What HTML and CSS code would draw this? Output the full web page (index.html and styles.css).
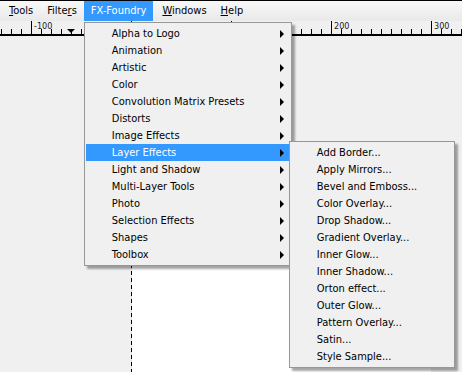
FILE: index.html
```html
<!DOCTYPE html>
<html lang="en">
<head>
  <meta charset="UTF-8">
  <meta name="viewport" content="width=device-width, initial-scale=1.0">
  <title>FX-Foundry menu</title>
  <link rel="stylesheet" href="styles.css">
</head>
<body>
  <div class="app">
    <div class="menubar">
      <span class="mb-item"><u>T</u>ools</span>
      <span class="mb-item">Filte<u>r</u>s</span>
      <span class="mb-item open">FX-Foundry
        <ul class="menu main-menu">
          <li>Alpha to Logo<i class="arrow"></i></li>
          <li>Animation<i class="arrow"></i></li>
          <li>Artistic<i class="arrow"></i></li>
          <li>Color<i class="arrow"></i></li>
          <li>Convolution Matrix Presets<i class="arrow"></i></li>
          <li>Distorts<i class="arrow"></i></li>
          <li>Image Effects<i class="arrow"></i></li>
          <li class="active">Layer Effects<i class="arrow"></i>
            <ul class="menu sub-menu">
              <li>Add Border...</li>
              <li>Apply Mirrors...</li>
              <li>Bevel and Emboss...</li>
              <li>Color Overlay...</li>
              <li>Drop Shadow...</li>
              <li>Gradient Overlay...</li>
              <li>Inner Glow...</li>
              <li>Inner Shadow...</li>
              <li>Orton effect...</li>
              <li>Outer Glow...</li>
              <li>Pattern Overlay...</li>
              <li>Satin...</li>
              <li>Style Sample...</li>
            </ul>
          </li>
          <li>Light and Shadow<i class="arrow"></i></li>
          <li>Multi-Layer Tools<i class="arrow"></i></li>
          <li>Photo<i class="arrow"></i></li>
          <li>Selection Effects<i class="arrow"></i></li>
          <li>Shapes<i class="arrow"></i></li>
          <li>Toolbox<i class="arrow"></i></li>
        </ul>
      </span>
      <span class="mb-item"><u>W</u>indows</span>
      <span class="mb-item"><u>H</u>elp</span>
    </div>

    <div class="ruler">
      <span class="mark">-100</span>
      <span class="mark"></span>
      <span class="mark"></span>
      <span class="mark">200</span>
      <span class="mark">300</span>
      <i class="pointer"></i>
    </div>

    <div class="workspace">
      <div class="canvas"></div>
    </div>
  </div>
</body>
</html>
```

FILE: styles.css
```css
*{
  box-sizing: border-box;
}

body{
  margin: 0;
  font-family: "DejaVu Sans", "Liberation Sans", sans-serif;
  font-stretch: condensed;
  font-size: 11px;
  color: #000;
  background: #f0f0f0;
}

.app{
  width: 462px;
  height: 372px;
  overflow: hidden;
  display: flex;
  flex-direction: column;
}

/* menu bar */
.menubar{
  height: 21px;
  border-top: 1px solid #000;
  padding-left: 2px;
  display: flex;
  background: linear-gradient(#f8f8f8, #e9e9e9);
}

.mb-item{
  position: relative;
  padding: 0 7px;
  line-height: 20px;
  white-space: nowrap;
}

.mb-item.open{
  background: #3399ff;
  color: #fff;
  margin-right: 2px;
}

/* dropdown menus */
.menu{
  position: absolute;
  margin: 0;
  padding: 2px 1px;
  list-style: none;
  background: #f0f0f0;
  border: 1px solid #979797;
  box-shadow: 3px 3px 2px rgba(0, 0, 0, 0.35);
  color: #000;
  z-index: 5;
}

.menu li{
  position: relative;
  height: 17px;
  line-height: 17px;
  white-space: nowrap;
}

.main-menu{
  left: 0;
  top: 21px;
  width: 208px;
}

.main-menu > li{
  padding-left: 26px;
}

.main-menu > li.active{
  background: #3399ff;
  color: #fff;
}

.arrow{
  position: absolute;
  right: 6px;
  top: 5px;
  width: 0;
  height: 0;
  border-top: 4px solid transparent;
  border-bottom: 4px solid transparent;
  border-left: 4px solid #000;
}

.sub-menu{
  left: 203px;
  top: -3px;
  width: 166px;
  color: #000;
}

.sub-menu li{
  padding-left: 26px;
}

/* ruler */
.ruler{
  position: relative;
  height: 17px;
  padding-left: 31px;
  display: flex;
  align-items: flex-end;
  border-bottom: 2px solid #000;
  background-color: #f0f0f0;
  background-image: repeating-linear-gradient(to right, #000 0 1px, transparent 1px 10px);
  background-size: 100% 5px;
  background-position: 1px 100%;
  background-repeat: repeat-x;
}

.mark{
  flex: none;
  width: 100px;
  height: 13px;
  padding: 1px 0 0 2px;
  border-left: 1px solid #000;
  font-size: 9px;
  line-height: 9px;
  color: #222;
}

.pointer{
  position: absolute;
  left: 67px;
  bottom: 1px;
  width: 0;
  height: 0;
  border-left: 4px solid transparent;
  border-right: 4px solid transparent;
  border-top: 4px solid #000;
}

/* image window */
.workspace{
  flex: 1;
  padding: 130px 0 0 131px;
}

.canvas{
  width: 300px;
  height: 300px;
  background: repeating-linear-gradient(#000 0 4px, #ff0 4px 7px) left top / 1px 100% no-repeat, #fff;
}
```
